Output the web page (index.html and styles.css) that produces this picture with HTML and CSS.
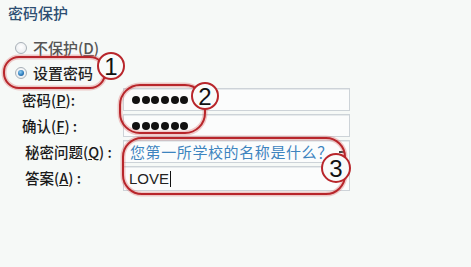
FILE: index.html
```html
<!DOCTYPE html>
<html lang="zh">
<head>
<meta charset="utf-8">
<link rel="stylesheet" href="styles.css">
</head>
<body>
<div class="page">
  <div class="title">密码保护</div>
  <div class="radios">
    <div class="radio-row"><span class="radio"></span><span>不保护(<u>D</u>)</span></div>
    <div class="radio-row"><span class="radio checked"></span><span>设置密码</span></div>
  </div>
  <div class="form">
    <div class="label">密码(<u>P</u>):</div>
    <div class="field"><div class="dots"><i></i><i></i><i></i><i></i><i></i><i></i></div></div>
    <div class="label">确认(<u>F</u>) :</div>
    <div class="field"><div class="dots"><i></i><i></i><i></i><i></i><i></i><i></i></div></div>
    <div class="label indent">秘密问题(<u>Q</u>) :</div>
    <div class="field select"><span class="question">您第一所学校的名称是什么？</span><span class="arrow"></span></div>
    <div class="label indent">答案(<u>A</u>) :</div>
    <div class="field answer"><span>LOVE</span><span class="caret"></span></div>
  </div>
  <svg class="marks" width="471" height="267" viewBox="0 0 471 267">
    <g fill="none">
      <rect x="4" y="57" width="101" height="31" rx="15" stroke="rgba(220,110,110,0.35)" stroke-width="5"/>
      <rect x="4" y="57" width="101" height="31" rx="15" stroke="#b8262b" stroke-width="2"/>
      <rect x="120" y="85" width="85" height="48" rx="20" stroke="rgba(220,110,110,0.35)" stroke-width="5"/>
      <rect x="120" y="85" width="85" height="48" rx="20" stroke="#b8262b" stroke-width="2"/>
      <rect x="123" y="138" width="222" height="56" rx="19" stroke="rgba(220,110,110,0.35)" stroke-width="5"/>
      <rect x="123" y="138" width="222" height="56" rx="19" stroke="#b8262b" stroke-width="2"/>
    </g>
    <g fill="#f9fbfa" stroke="#b8262b" stroke-width="2">
      <circle cx="111" cy="66" r="13"/>
      <circle cx="205" cy="96" r="13"/>
      <circle cx="336" cy="168" r="14"/>
    </g>
    <g class="num" text-anchor="middle">
      <text x="111" y="75">1</text>
      <text x="205" y="105">2</text>
      <text x="336" y="177">3</text>
    </g>
  </svg>
</div>
</body>
</html>
```

FILE: styles.css
```css
html, body {
  margin: 0;
  padding: 0;
  background: #f6f9f7;
}
body {
  width: 471px;
  height: 267px;
  overflow: hidden;
  font-family: "Noto Sans CJK SC", "Liberation Sans", sans-serif;
  color: #222;
}
.page {
  position: relative;
  width: 471px;
  height: 267px;
  padding: 3px 0 0 8px;
  box-sizing: border-box;
}
.title {
  font-size: 15px;
  line-height: 20px;
  color: #2d4e72;
  font-weight: 500;
}
.radios {
  margin-top: 12px;
  display: flex;
  flex-direction: column;
  padding-left: 7px;
}
.radio-row {
  display: flex;
  align-items: center;
  gap: 6px;
  height: 25px;
  font-size: 15px;
  color: #222;
  font-weight: 500;
}
.radio-row:first-child { color: #555; }
.radio {
  width: 12px;
  height: 12px;
  border-radius: 50%;
  border: 1px solid #a9b1b8;
  background: radial-gradient(circle at 50% 40%, #fff 0%, #e4e8eb 100%);
  box-sizing: border-box;
  position: relative;
}
.radio.checked::after {
  content: "";
  position: absolute;
  left: 2px;
  top: 2px;
  width: 6px;
  height: 6px;
  border-radius: 50%;
  background: radial-gradient(circle at 40% 35%, #8fd0f5 0%, #2a78b8 60%, #1a4f85 100%);
}
u { text-decoration: underline; text-underline-offset: 1px; }
.form {
  margin-top: 3px;
  display: grid;
  grid-template-columns: 101px 227px;
  grid-auto-rows: 23px;
  row-gap: 3px;
  padding-left: 14px;
}
.label {
  font-size: 14.5px;
  line-height: 23px;
  color: #1a1a1a;
  font-weight: 500;
  white-space: nowrap;
}
.label.indent { padding-left: 3px; }
.field {
  border: 1px solid #cdd3d8;
  background: #fbfcfc;
  box-sizing: border-box;
  display: flex;
  align-items: center;
  padding-left: 8px;
  box-shadow: inset 0 1px 0 #e6eaec;
}
.dots {
  display: flex;
  gap: 1.7px;
}
.dots i {
  width: 8px;
  height: 8px;
  border-radius: 50%;
  background: #111;
}
.select {
  padding-left: 6px;
  justify-content: space-between;
  padding-right: 4px;
}
.question {
  font-size: 15px;
  color: #3d84bf;
  letter-spacing: 0.6px;
}
.arrow {
  width: 6px;
  height: 2px;
  background: #444;
}
.answer {
  padding-left: 5px;
  font-family: "Liberation Sans", sans-serif;
  font-size: 15px;
  color: #222;
  height: 25px;
}
.caret {
  width: 1px;
  height: 16px;
  background: #111;
  margin-left: 1px;
}
.marks {
  position: absolute;
  left: 0;
  top: 0;
  pointer-events: none;
}
.num text {
  font-family: "Liberation Sans", sans-serif;
  font-size: 24px;
  fill: #111;
}
```
